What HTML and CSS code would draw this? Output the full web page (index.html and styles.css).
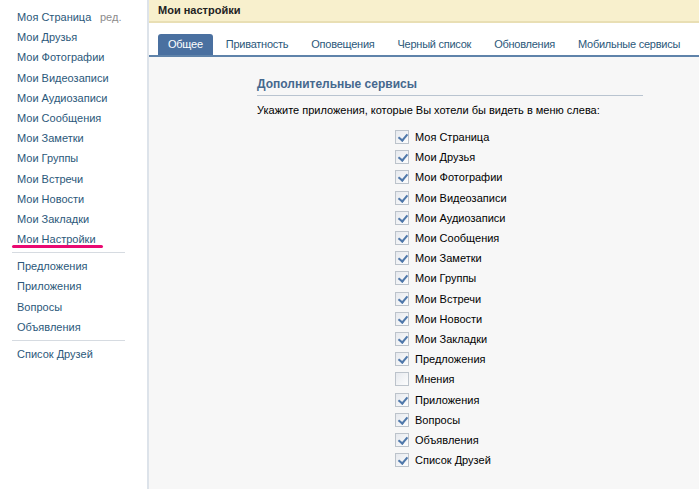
FILE: index.html
```html
<!DOCTYPE html>
<html lang="ru">
<head>
<meta charset="utf-8">
<title>Мои настройки</title>
<link rel="stylesheet" href="styles.css">
</head>
<body>
<div class="page">
  <nav class="sidebar">
    <ul class="menu">
      <li><a href="#">Моя Страница</a><span class="edit">ред.</span></li>
      <li><a href="#">Мои Друзья</a></li>
      <li><a href="#">Мои Фотографии</a></li>
      <li><a href="#">Мои Видеозаписи</a></li>
      <li><a href="#">Мои Аудиозаписи</a></li>
      <li><a href="#">Мои Сообщения</a></li>
      <li><a href="#">Мои Заметки</a></li>
      <li><a href="#">Мои Группы</a></li>
      <li><a href="#">Мои Встречи</a></li>
      <li><a href="#">Мои Новости</a></li>
      <li><a href="#">Мои Закладки</a></li>
      <li class="marked"><a href="#">Мои Настройки</a><span class="mark"></span></li>
    </ul>
    <div class="sep"></div>
    <ul class="menu">
      <li><a href="#">Предложения</a></li>
      <li><a href="#">Приложения</a></li>
      <li><a href="#">Вопросы</a></li>
      <li><a href="#">Объявления</a></li>
    </ul>
    <div class="sep"></div>
    <ul class="menu">
      <li><a href="#">Список Друзей</a></li>
    </ul>
  </nav>
  <main class="main">
    <header class="topbar">Мои настройки</header>
    <div class="tabs">
      <a class="tab active" href="#">Общее</a>
      <a class="tab" href="#">Приватность</a>
      <a class="tab" href="#">Оповещения</a>
      <a class="tab" href="#">Черный список</a>
      <a class="tab" href="#">Обновления</a>
      <a class="tab" href="#">Мобильные сервисы</a>
    </div>
    <section class="content">
      <h2 class="section-title">Дополнительные сервисы</h2>
      <p class="hint">Укажите приложения, которые Вы хотели бы видеть в меню слева:</p>
      <ul class="checks">
        <li><span class="cb on"></span>Моя Страница</li>
        <li><span class="cb on"></span>Мои Друзья</li>
        <li><span class="cb on"></span>Мои Фотографии</li>
        <li><span class="cb on"></span>Мои Видеозаписи</li>
        <li><span class="cb on"></span>Мои Аудиозаписи</li>
        <li><span class="cb on"></span>Мои Сообщения</li>
        <li><span class="cb on"></span>Мои Заметки</li>
        <li><span class="cb on"></span>Мои Группы</li>
        <li><span class="cb on"></span>Мои Встречи</li>
        <li><span class="cb on"></span>Мои Новости</li>
        <li><span class="cb on"></span>Мои Закладки</li>
        <li><span class="cb on"></span>Предложения</li>
        <li><span class="cb"></span>Мнения</li>
        <li><span class="cb on"></span>Приложения</li>
        <li><span class="cb on"></span>Вопросы</li>
        <li><span class="cb on"></span>Объявления</li>
        <li><span class="cb on"></span>Список Друзей</li>
      </ul>
    </section>
  </main>
</div>
</body>
</html>
```
FILE: styles.css
```css
* { box-sizing: border-box; }
html, body { margin: 0; padding: 0; height: 100%; }
body {
  font-family: "Liberation Sans", Arial, sans-serif;
  font-size: 11px;
  color: #000;
  background: #fff;
}
a { color: #2b587a; text-decoration: none; }
.page { display: flex; min-height: 100%; height: 489px; overflow: hidden; }

.sidebar {
  width: 149px;
  flex: none;
  padding: 7px 0 0 12px;
  border-right: 2px solid #dde3ea;
  background: #fff;
}
.menu { list-style: none; margin: 0; padding: 0; }
.menu li { position: relative; height: 20.2px; line-height: 20px; padding-left: 5px; white-space: nowrap; }
.edit { position: absolute; left: 88px; top: 0; color: #8c8c8c; }
.mark {
  position: absolute;
  left: 0; top: 16px;
  width: 91px; height: 3px;
  background: #ea0a72;
  border-radius: 2px;
}
.sep { width: 113px; height: 1px; background: #d6dbe1; margin: 3px 0; }

.main { flex: 1; display: flex; flex-direction: column; background: #f7f7f7; }
.topbar {
  height: 23px;
  line-height: 21px;
  padding-left: 9px;
  background: #f8f0cd;
  border-bottom: 2px solid #e9dfb4;
  font-weight: bold;
  color: #222;
}
.tabs {
  display: flex;
  gap: 3px;
  height: 34px;
  padding: 11px 0 0 9px;
  background: #fff;
  border-bottom: 2px solid #5f83aa;
}
.tab {
  height: 21px;
  line-height: 21px;
  padding: 0 10px;
  color: #2b587a;
  letter-spacing: -0.25px;
  border-radius: 3px 3px 0 0;
  white-space: nowrap;
}
.tab.active { background: #4a70a0; color: #fff; }

.content { padding: 19px 0 0 108px; }
.section-title {
  width: 386px;
  margin: 0;
  padding: 0 0 3px 0;
  font-size: 12px;
  font-weight: bold;
  color: #45688e;
  border-bottom: 1px solid #b9c4d0;
  line-height: 16px;
}
.hint { margin: 7px 0 0 0; line-height: 14px; }
.checks { list-style: none; margin: 10px 0 0 138px; padding: 0; }
.checks li { display: flex; align-items: center; height: 20.2px; line-height: 20px; }
.cb {
  width: 14px; height: 14px;
  margin-right: 6px;
  border: 1px solid #bcc3cb;
  background: linear-gradient(135deg, #e6e9ee, #fdfdfd);
  position: relative;
  flex: none;
}
.cb.on::after {
  content: "";
  position: absolute;
  left: 4px; top: 1px;
  width: 4px; height: 7px;
  border-right: 2px solid #4f78aa;
  border-bottom: 2px solid #4f78aa;
  transform: rotate(40deg);
}
```
